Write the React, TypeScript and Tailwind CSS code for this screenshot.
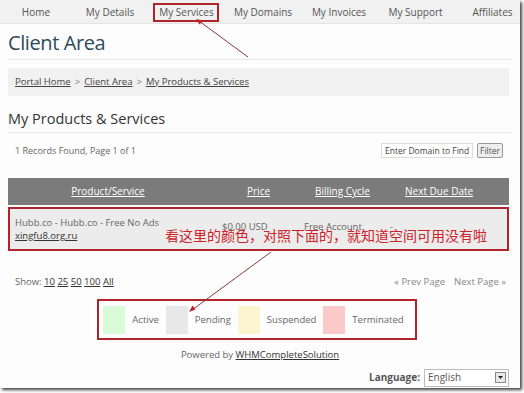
import React from 'react'

// Nav items with their cell widths, so each label sits centred where the screenshot has it
const NAV: { label: string; w: string }[] = [
  { label: 'Home', w: 'w-[72px]' },
  { label: 'My Details', w: 'w-[76px]' },
  { label: 'My Services', w: 'w-[77px]' },
  { label: 'My Domains', w: 'w-[76px]' },
  { label: 'My Invoices', w: 'w-[76px]' },
  { label: 'My Support', w: 'w-[77px]' },
  { label: 'Affiliates', w: 'w-[77px]' },
]

const LEGEND: { label: string; color: string }[] = [
  { label: 'Active', color: 'bg-[#d8fcd8]' },
  { label: 'Pending', color: 'bg-[#e8e8e8]' },
  { label: 'Suspended', color: 'bg-[#fdf5cf]' },
  { label: 'Terminated', color: 'bg-[#fcc9cb]' },
]

export default function App() {
  return (
    <div className="w-[524px] h-[393px] bg-white overflow-hidden font-['Open_Sans',sans-serif]">
      <div className="relative w-[520px] h-[388px] bg-[#fdfdfd] shadow-[2px_2px_3px_rgba(0,0,0,0.75)] flex flex-col">
        {/* top nav */}
        <div className="flex h-[24px] shrink-0 items-center pt-[2px] bg-[#f1f1f1] border-b border-[#e4e4e4] text-[10px] text-[#555]">
          {NAV.map((n) => (
            <div key={n.label} className={`${n.w} shrink-0 text-center`}>
              {n.label}
            </div>
          ))}
        </div>

        <div className="px-[8px]">
          <h1 className="mt-[6px] text-[20px] leading-[26px] text-[#2d4a5c] tracking-[-0.4px]">Client Area</h1>
          <div className="mt-[3px] border-t border-[#e6e6e6]" />

          {/* breadcrumb */}
          <div className="mt-[8px] mr-[3px] h-[28px] bg-[#f1f1f1] flex items-center px-[7px] text-[9.5px] text-[#444]">
            <span className="underline">Portal Home</span>
            <span className="mx-[4px] text-[#777]">&gt;</span>
            <span className="underline">Client Area</span>
            <span className="mx-[4px] text-[#777]">&gt;</span>
            <span className="underline">My Products &amp; Services</span>
          </div>

          <h2 className="mt-[13px] text-[14.5px] leading-[20px] text-[#333]">My Products &amp; Services</h2>
          <div className="mt-[3px] border-t border-[#e6e6e6]" />

          <div className="mt-[10px] flex items-center justify-between pr-[9px]">
            <span className="pl-[7px] text-[9px] text-[#666]">1 Records Found, Page 1 of 1</span>
            <div className="flex items-center gap-[4px]">
              <div className="w-[92px] h-[15px] border border-[#ddd] bg-white text-[8.5px] leading-[13px] pl-[3px] text-[#444]">
                Enter Domain to Find
              </div>
              <div className="h-[15px] px-[2px] border border-[#999] rounded-[2px] bg-[#eee] text-[8.5px] leading-[13px] text-[#555]">
                Filter
              </div>
            </div>
          </div>

          {/* table */}
          <div className="mt-[20px] mr-[3px]">
            <div className="h-[27px] bg-[#7b7b7b] flex items-center text-[10px] text-white">
              <div className="w-[200px] text-center underline">Product/Service</div>
              <div className="w-[104px] pl-[39px] underline">Price</div>
              <div className="w-[90px] pl-[3px] underline">Billing Cycle</div>
              <div className="pl-[3px] underline">Next Due Date</div>
            </div>
            <div className="mt-[2px] h-[44px] bg-[#ececec] border-2 border-[#b0232a] flex items-center text-[9.5px] text-[#666]">
              <div className="w-[212px] pl-[5px] leading-[13px]">
                <div>Hubb.co - Hubb.co - Free No Ads</div>
                <div className="underline text-[#333]">xingfu8.org.ru</div>
              </div>
              <div className="w-[82px] pb-[4px]">$0.00 USD</div>
              <div className="w-[86px] pb-[4px]">Free Account</div>
              <div className="pb-[4px]">-</div>
            </div>
          </div>

          <div className="mt-[24px] flex items-center justify-between pr-[6px] text-[9.5px] text-[#666]">
            <div className="pl-[7px]">
              Show: <span className="underline text-[#333]">10</span> <span className="underline text-[#333]">25</span>{' '}
              <span className="underline text-[#333]">50</span> <span className="underline text-[#333]">100</span>{' '}
              <span className="underline text-[#333]">All</span>
            </div>
            <div className="text-[#888]">
              « Prev Page<span className="ml-[9px]">Next Page »</span>
            </div>
          </div>

          {/* status legend */}
          <div className="mt-[10px] flex justify-center pr-[6px]">
            <div className="h-[41px] border-2 border-[#b0232a] flex items-center pl-[4px] pr-[4px] text-[9.5px] text-[#666]">
              {LEGEND.map((l) => (
                <div key={l.label} className="flex items-center">
                  <div className={`w-[22px] h-[28px] ${l.color}`} />
                  <span className="px-[7px]">{l.label}</span>
                </div>
              ))}
            </div>
          </div>

          <div className="mt-[8px] text-center text-[9.5px] text-[#666]">
            Powered by <span className="underline text-[#333]">WHMCompleteSolution</span>
          </div>

          <div className="mt-[6px] flex items-center justify-end gap-[4px] pr-[3px]">
            <span className="text-[10px] font-bold text-[#555]">Language:</span>
            <div className="w-[85px] h-[18px] border border-[#bbb] bg-white flex items-center justify-between pl-[3px] pr-[2px]">
              <span className="text-[10px] text-[#555]">English</span>
              <div className="w-[11px] h-[11px] border border-[#888] bg-[#e8e8e8] flex items-center justify-center">
                <svg width="5" height="3" viewBox="0 0 5 3">
                  <path d="M0 0h5L2.5 3z" fill="#222" />
                </svg>
              </div>
            </div>
          </div>
        </div>

        {/* annotations drawn over the page */}
        <div className="absolute left-[153px] top-[3px] w-[66px] h-[19px] border-2 border-[#b0232a]" />
        <div className="absolute left-[165px] top-[226px] text-[14px] leading-[18px] text-[#cc2229] font-['Noto_Sans_CJK_SC',sans-serif] whitespace-nowrap">
          看这里的颜色，对照下面的，就知道空间可用没有啦
        </div>
        <svg className="absolute left-0 top-0 pointer-events-none" width="520" height="388">
          <line x1="248" y1="57" x2="199" y2="21" stroke="#8a3a3a" strokeWidth="1" />
          <path d="M196 19l7 1.5-3.5 4z" fill="#c0202a" />
          <line x1="271" y1="252" x2="192" y2="310" stroke="#8a3a3a" strokeWidth="1" />
          <path d="M189 312l3.5-6.5 3 4z" fill="#c0202a" />
        </svg>
      </div>
    </div>
  )
}
